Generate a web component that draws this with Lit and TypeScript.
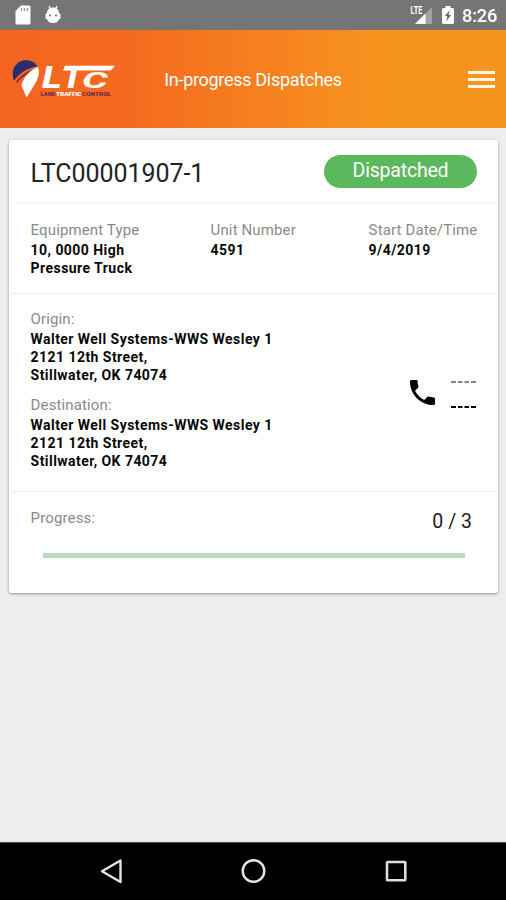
import { LitElement, html, css, svg } from "lit";
import { customElement, property } from "lit/decorators.js";

const ltcLogo = svg`
  <svg width="106" height="42" viewBox="0 0 106 42">
    <path d="M3 23C-0.500 13 3.500 4.500 12 2.500C18 1.500 24 3.500 26.500 8.500C18 9.500 9 14 3 23Z" fill="#2b2d6e"/>
    <path d="M3.500 22.500C9.500 14.500 17 10.500 26.500 8.500L26.800 10.500C17 12.500 9 17.500 4.800 24Z" fill="#f4651f"/>
    <path d="M4.800 24C10 17 17 12.500 26 10.500L19 15C13 17.500 9 20.500 6 25Z" fill="#6b2f50"/>
    <path d="M10.500 27.500C12.500 19.500 18 12.500 27 9C29.500 16 26.500 22 23 27.500L15.500 39.500Z" fill="#fff"/>
    <text class="mark" transform="translate(31 30) scale(1.22 1)">L</text>
    <text class="mark" transform="translate(50.500 30) scale(1.150 1)">T</text>
    <path d="M54.500 7.800H104L99.800 12.400H52Z" fill="#fff"/>
    <text class="mark small" transform="translate(71 29.800) scale(1.900 1)">C</text>
    <text class="tag navy" x="29.500" y="38.200" textLength="15" lengthAdjust="spacingAndGlyphs">LAND</text>
    <text class="tag" x="45" y="38.200" textLength="25.500" lengthAdjust="spacingAndGlyphs">TRAFFIC</text>
    <text class="tag navy" x="71" y="38.200" textLength="29" lengthAdjust="spacingAndGlyphs">CONTROL</text>
  </svg>`;

@customElement("status-bar")
class StatusBar extends LitElement {
  static styles = css`
    :host { display: flex; align-items: center; height: 30px; background: #757575; color: #fff; }
    svg { display: block; flex: none; }
    .sd { margin-left: 15px; }
    .debug { margin-left: 14px; }
    .signal { margin-left: auto; }
    .battery { margin-left: 9px; }
    .time { width: 35px; margin: 2px 9px 0 8px; font-size: 18px; line-height: 24px; font-weight: 500; letter-spacing: -0.1px; white-space: nowrap; }
    .lte { font: 700 10px "Roboto", sans-serif; fill: #fff; }
  `;
  render() {
    return html`
      <svg class="sd" width="16" height="20" viewBox="0 0 16 20">
        <path d="M6 0.500H14Q15.500 0.500 15.500 2V18Q15.500 19.500 14 19.500H2Q0.500 19.500 0.500 18V6Z" fill="#fff"/>
        <path d="M6.500 3V6M9.500 3V6M12.500 3V6" stroke="#999" stroke-width="1.400"/>
      </svg>
      <svg class="debug" width="16" height="20" viewBox="0 0 16 20">
        <path d="M4 1L5.500 4M12 1L10.500 4" stroke="#fff" stroke-width="1.300"/>
        <path d="M2 8C2 4 5 2.500 8 2.500S14 4 14 8L15.500 9V14H14C13 17 11 18 8 18S3 17 2 14H0.500V9Z" fill="#fff"/>
        <circle cx="5" cy="10.500" r="1" fill="#666"/><circle cx="11" cy="10.500" r="1" fill="#666"/>
      </svg>
      <svg class="signal" width="23" height="20" viewBox="0 0 23 20">
        <path d="M22 2V19H5Z" fill="#a2a2a2"/>
        <path d="M15.500 8.500V19H5Z" fill="#fff"/>
        <text class="lte" x="0.500" y="9" textLength="12" lengthAdjust="spacingAndGlyphs">LTE</text>
      </svg>
      <svg class="battery" width="12" height="20" viewBox="0 0 12 20">
        <path d="M3.500 1H8.500V3H10.500Q12 3 12 4.500V17.500Q12 19 10.500 19H1.500Q0 19 0 17.500V4.500Q0 3 1.500 3H3.500Z" fill="#fff"/>
        <path d="M8 5L2.800 11H5.500L4 16.500L9.200 10H6.500Z" fill="#686868"/>
      </svg>
      <span class="time">8:26</span>`;
  }
}

@customElement("app-header")
class AppHeader extends LitElement {
  static styles = css`
    :host { display: flex; align-items: center; height: 98px; box-sizing: border-box; padding: 0 11px;
      background: linear-gradient(90deg, #f4651f 0%, #f4691f 24%, #f7941e 76%, #f7941e 100%); color: #fff; }
    .logo { flex: 1; height: 42px; }
    .mark { font: italic 800 31px "Roboto", sans-serif; fill: #fff; }
    .small { font-size: 21.5px; font-weight: 700; }
    .tag { font: 900 5.500px "Roboto", sans-serif; fill: #fff; }
    .navy { fill: #6b2f50; }
    .title { font-size: 18px; line-height: 24px; padding-top: 2px; letter-spacing: -0.3px; white-space: nowrap; }
    .menu { flex: 1; display: flex; flex-direction: column; align-items: flex-end; gap: 4px; }
    .line { width: 27px; height: 3px; background: #fff5e8; }
  `;
  render() {
    return html`
      <div class="logo">${ltcLogo}</div>
      <div class="title">In-progress Dispatches</div>
      <div class="menu"><div class="line"></div><div class="line"></div><div class="line"></div></div>`;
  }
}

@customElement("label-value")
class LabelValue extends LitElement {
  @property() label = "";
  @property({ attribute: false }) lines: string[] = [];
  static styles = css`
    :host { display: block; }
    .label { font-size: 15px; line-height: 20px; padding-bottom: 1px; color: #8a8a8a; letter-spacing: 0.13px; white-space: nowrap; }
    .value { font-size: 14px; line-height: 18px; font-weight: 700; color: #080808; letter-spacing: 0.45px; white-space: nowrap; }
  `;
  render() {
    return html`<div class="label">${this.label}</div>
      ${this.lines.map((l) => html`<div class="value">${l}</div>`)}`;
  }
}

@customElement("dispatch-card")
class DispatchCard extends LitElement {
  static styles = css`
    :host { display: block; box-sizing: border-box; height: 453px; margin: 12px 8px 0 9px; background: #fff;
      border-radius: 2px; box-shadow: 0 1px 3px rgba(0, 0, 0, 0.4); padding: 0 3px; }
    section { box-sizing: border-box; padding: 0 18px 0 18.6px; border-bottom: 1px solid #ececec; }
    .top { height: 64px; display: flex; align-items: center; justify-content: space-between; border-bottom: 2px solid #f6f6f6; }
    .id { font-size: 25px; line-height: 32px; color: #222; padding-top: 5px; letter-spacing: -0.05px; }
    .badge { width: 153px; height: 33px; border-radius: 17px; background: #5cb85c; color: #fff; font-size: 19.5px;
      line-height: 32px; text-align: center; letter-spacing: -0.2px; }
    .facts { height: 90px; padding-top: 16px; display: grid; grid-template-columns: 180px 158px 1fr; }
    .route { height: 198px; padding-top: 15px; display: flex; justify-content: space-between; }
    .stops { display: flex; flex-direction: column; gap: 11px; }
    .contact { display: flex; gap: 16px; padding-top: 69px; }
    .phone { display: block; margin-top: 2px; }
    .dashes { display: flex; flex-direction: column; gap: 23px; padding-top: 3px; margin-right: 1px; }
    .dash { display: block; }
    .progress { height: 100px; padding-top: 16px; border: 0; }
    .row { display: flex; justify-content: space-between; align-items: flex-start; }
    .count { font-size: 19.5px; line-height: 28px; height: 28px; color: #1c1c1c; padding-right: 5px; letter-spacing: 0; }
    .track { height: 5px; margin: 17px 12px 0; background: #b9dcb9; }
  `;
  render() {
    const address = ["Walter Well Systems-WWS Wesley 1", "2121 12th Street,", "Stillwater, OK 74074"];
    const dash = (color: string) => html`<svg class="dash" width="25" height="2" viewBox="0 0 25 2">
      <path d="M0 1H5M7 1H11.500M13.500 1H18M20 1H25" stroke=${color} stroke-width="2"/></svg>`;
    return html`
      <section class="top"><div class="id">LTC00001907-1</div><div class="badge">Dispatched</div></section>
      <section class="facts">
        <label-value label="Equipment Type" .lines=${["10, 0000 High", "Pressure Truck"]}></label-value>
        <label-value label="Unit Number" .lines=${["4591"]}></label-value>
        <label-value label="Start Date/Time" .lines=${["9/4/2019"]}></label-value>
      </section>
      <section class="route">
        <div class="stops">
          <label-value label="Origin:" .lines=${address}></label-value>
          <label-value label="Destination:" .lines=${address}></label-value>
        </div>
        <div class="contact">
          <svg class="phone" width="25" height="25" viewBox="3 3 18 18">
            <path d="M6.620 10.790c1.440 2.830 3.760 5.140 6.590 6.590l2.200-2.200c.270-.270.670-.360 1.020-.240 1.120.370 2.330.570 3.570.570.550 0 1 .450 1 1V20c0 .550-.450 1-1 1-9.390 0-17-7.610-17-17 0-.550.450-1 1-1h3.500c.550 0 1 .450 1 1 0 1.250.200 2.450.570 3.570.110.350.030.740-.250 1.020l-2.200 2.200z" fill="#000"/>
          </svg>
          <div class="dashes">${dash("#858585")}${dash("#000")}</div>
        </div>
      </section>
      <section class="progress">
        <div class="row"><label-value label="Progress:"></label-value><div class="count">0 / 3</div></div>
        <div class="track"></div>
      </section>`;
  }
}

@customElement("nav-bar")
class NavBar extends LitElement {
  static styles = css`
    :host { display: flex; align-items: center; justify-content: space-between; height: 58px; box-sizing: border-box;
      padding: 0 97px 0 99px; background: #000; border-top: 1px solid #444; }
    svg { display: block; }
  `;
  render() {
    return html`
      <svg width="26" height="26" viewBox="0 0 26 26"><path d="M21.500 1.500V23L3 12.200Z" fill="none" stroke="#e4e4e4" stroke-width="2.400" stroke-linejoin="round"/></svg>
      <svg width="26" height="26" viewBox="0 0 26 26"><circle cx="12.500" cy="12" r="10.800" fill="none" stroke="#e4e4e4" stroke-width="2.400"/></svg>
      <svg width="26" height="26" viewBox="0 0 26 26"><rect x="4" y="3" width="18.300" height="18.300" rx="0.500" fill="none" stroke="#dedede" stroke-width="2.600"/></svg>`;
  }
}

@customElement("app-root")
class AppRoot extends LitElement {
  static styles = css`
    :host { display: flex; flex-direction: column; width: 506px; height: 900px; overflow: hidden; background: #eee;
      font-family: "Roboto", "Liberation Sans", sans-serif; }
    nav-bar { margin-top: auto; }
  `;
  render() {
    return html`<status-bar></status-bar><app-header></app-header><dispatch-card></dispatch-card><nav-bar></nav-bar>`;
  }
}
